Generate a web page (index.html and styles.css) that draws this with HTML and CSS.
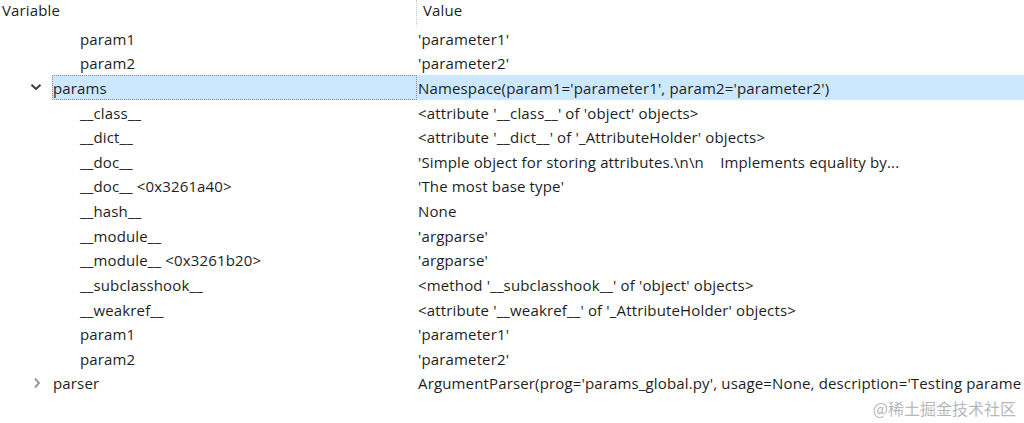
FILE: index.html
```html
<!DOCTYPE html>
<html>
<head>
<meta charset="utf-8">
<link rel="stylesheet" href="styles.css">
</head>
<body>
<div class="grid">
  <div class="head">
    <div class="hcell var">Variable</div>
    <div class="hcell val">Value</div>
  </div>
  <div class="row"><div class="name l1">param1</div><div class="value">'parameter1'</div></div>
  <div class="row"><div class="name l1">param2</div><div class="value">'parameter2'</div></div>
  <div class="row sel">
    <div class="name l0"><span class="tw"><svg width="12" height="8" viewBox="0 0 12 8"><path d="M1.5 1.8 L6 6 L10.5 1.8" fill="none" stroke="#3a3a3a" stroke-width="1.9"/></svg></span><span class="lbl">params</span></div>
    <div class="value">Namespace(param1='parameter1', param2='parameter2')</div>
  </div>
  <div class="row"><div class="name l1">__class__</div><div class="value">&lt;attribute '__class__' of 'object' objects&gt;</div></div>
  <div class="row"><div class="name l1">__dict__</div><div class="value">&lt;attribute '__dict__' of '_AttributeHolder' objects&gt;</div></div>
  <div class="row"><div class="name l1">__doc__</div><div class="value">'Simple object for storing attributes.\n\n&nbsp;&nbsp;&nbsp;&nbsp;Implements equality by...</div></div>
  <div class="row"><div class="name l1">__doc__ &lt;0x3261a40&gt;</div><div class="value">'The most base type'</div></div>
  <div class="row"><div class="name l1">__hash__</div><div class="value">None</div></div>
  <div class="row"><div class="name l1">__module__</div><div class="value">'argparse'</div></div>
  <div class="row"><div class="name l1">__module__ &lt;0x3261b20&gt;</div><div class="value">'argparse'</div></div>
  <div class="row"><div class="name l1">__subclasshook__</div><div class="value">&lt;method '__subclasshook__' of 'object' objects&gt;</div></div>
  <div class="row"><div class="name l1">__weakref__</div><div class="value">&lt;attribute '__weakref__' of '_AttributeHolder' objects&gt;</div></div>
  <div class="row"><div class="name l1">param1</div><div class="value">'parameter1'</div></div>
  <div class="row"><div class="name l1">param2</div><div class="value">'parameter2'</div></div>
  <div class="row">
    <div class="name l0"><span class="tw"><svg width="12" height="12" viewBox="0 0 12 12"><path d="M5 1.5 L9 6 L5 10.5" fill="none" stroke="#9a9a9a" stroke-width="1.9"/></svg></span><span class="lbl">parser</span></div>
    <div class="value">ArgumentParser(prog='params_global.py', usage=None, description='Testing parame</div>
  </div>
</div>
<div class="watermark">@稀土掘金技术社区</div>
</body>
</html>
```

FILE: styles.css
```css
html, body {
  margin: 0;
  padding: 0;
  background: #ffffff;
  width: 1024px;
  height: 423px;
  overflow: hidden;
}
body {
  font-family: "Open Sans", "Noto Sans", sans-serif;
  font-size: 15px;
  letter-spacing: 0.15px;
  color: #1e1e1e;
  position: relative;
}
.grid {
  display: flex;
  flex-direction: column;
}
.head {
  display: grid;
  grid-template-columns: 417px 1fr;
  height: 25.7px;
}
.hcell {
  line-height: 20px;
  white-space: nowrap;
}
.hcell.var {
  padding-left: 2px;
  border-right: 1px dotted #c8c8c8;
}
.hcell.val {
  padding-left: 6px;
}
.row {
  display: grid;
  grid-template-columns: 417px 1fr;
  height: 24.64px;
  line-height: 27px;
  white-space: nowrap;
}
.name {
  overflow: hidden;
  display: flex;
  align-items: center;
  height: 24.64px;
}
.name.l1 {
  padding-left: 80px;
  display: block;
}
.name.l0 {
  padding-left: 30px;
}
.tw {
  width: 22px;
  display: flex;
  align-items: center;
  height: 100%;
}
.lbl {
  flex: 1;
  height: 100%;
  padding-left: 1px;
}
.value {
  padding-left: 1px;
  overflow: hidden;
  height: 24.64px;
}
.row.sel .lbl {
  background: #cce8ff;
  outline: 1px dotted #8a8a8a;
  outline-offset: -1px;
}
.row.sel .value {
  background: #cce8ff;
}
.watermark {
  position: absolute;
  right: 8px;
  bottom: 3px;
  font-family: "Noto Sans CJK SC", sans-serif;
  font-size: 16px;
  letter-spacing: 0;
  color: #b8b8b8;
}
```
